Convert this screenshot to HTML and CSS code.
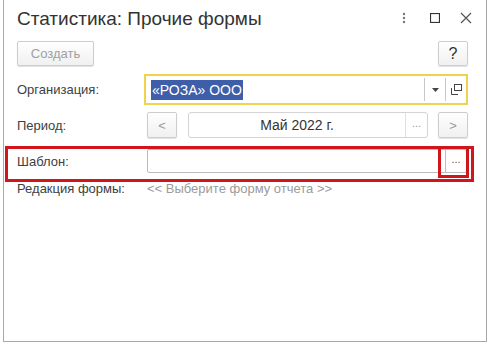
FILE: index.html
```html
<!DOCTYPE html>
<html lang="ru">

<head>
    <meta charset="UTF-8">
    <meta name="viewport" content="width=device-width, initial-scale=1.0">
    <title>Статистика: Прочие формы</title>
    <link rel="stylesheet" href="styles.css">
</head>

<body>
    <div id="window">
        <div class="head">
            <h1 class="title">Статистика: Прочие формы</h1>
            <div class="head-tools">
                <span class="tool">
                    <svg width="4" height="12" viewBox="0 0 4 12"><circle cx="2" cy="2" r="1.2" fill="#777"/><circle cx="2" cy="6" r="1.2" fill="#777"/><circle cx="2" cy="10" r="1.2" fill="#777"/></svg>
                </span>
                <span class="tool">
                    <svg width="10" height="10" viewBox="0 0 10 10"><rect x="0.5" y="0.5" width="9" height="9" fill="none" stroke="#333" stroke-width="1.2"/></svg>
                </span>
                <span class="tool">
                    <svg width="12" height="12" viewBox="0 0 12 12"><path d="M1 1 L11 11 M11 1 L1 11" stroke="#555" stroke-width="1.2"/></svg>
                </span>
            </div>
        </div>

        <div class="toolbar">
            <button class="btn btn-create">Создать</button>
            <button class="btn btn-help">?</button>
        </div>

        <div class="row row-org">
            <label class="lbl">Организация:</label>
            <div class="field field-org">
                <span class="field-text"><span class="selected">«РОЗА» ООО</span></span>
                <span class="field-btn">
                    <svg width="7" height="4" viewBox="0 0 7 4"><path d="M0 0 H7 L3.5 4 Z" fill="#444"/></svg>
                </span>
                <span class="field-btn">
                    <svg width="11" height="11" viewBox="0 0 11 11"><rect x="3.5" y="0.5" width="7" height="6" fill="none" stroke="#444"/><path d="M0.5 4 V10.5 H7" fill="none" stroke="#444"/></svg>
                </span>
            </div>
        </div>

        <div class="row row-period">
            <label class="lbl">Период:</label>
            <button class="btn btn-arrow">&lt;</button>
            <div class="field field-period">
                <span class="field-text center">Май 2022 г.</span>
                <span class="field-btn dots">...</span>
            </div>
            <button class="btn btn-arrow">&gt;</button>
        </div>

        <div class="row row-tpl">
            <label class="lbl">Шаблон:</label>
            <div class="field field-tpl">
                <span class="field-text"></span>
                <span class="field-btn dots">...</span>
            </div>
            <div class="mark mark-row"></div>
            <div class="mark mark-btn"></div>
        </div>

        <div class="row row-ver">
            <label class="lbl">Редакция формы:</label>
            <span class="hint">&lt;&lt; Выберите форму отчета &gt;&gt;</span>
        </div>
    </div>
</body>

</html>
```

FILE: styles.css
```css
* {
    margin: 0;
    padding: 0;
    box-sizing: border-box;
}

body {
    background: #fff;
    font-family: "Liberation Sans", Arial, sans-serif;
    font-size: 13px;
    color: #444;
}

#window {
    width: 484px;
    height: 342px;
    margin-left: 3px;
    border: 1px solid #a8a8a8;
    border-top: none;
    padding: 0 18px 0 13px;
    position: relative;
}

.head {
    display: flex;
    align-items: center;
    height: 36px;
}

.title {
    flex: 1;
    font-weight: normal;
    font-size: 19px;
    color: #333;
    padding-top: 1px;
}

.head-tools {
    display: flex;
    align-items: center;
    margin-right: -13px;
}

.tool {
    display: flex;
    justify-content: center;
    align-items: center;
    width: 31px;
    height: 20px;
}

.btn {
    font-family: inherit;
    font-size: 13px;
    height: 25px;
    border: 1px solid #cdcdcd;
    border-radius: 2px;
    background: linear-gradient(#fff, #f0f0f0);
    box-shadow: 0 1px 1px rgba(0, 0, 0, 0.12);
    color: #333;
}

.toolbar {
    display: flex;
    justify-content: space-between;
    margin-top: 5px;
}

.btn-create {
    width: 77px;
    color: #a0a0a0;
}

.btn-help {
    width: 30px;
    font-size: 16px;
}

.row {
    display: flex;
    align-items: center;
    position: relative;
}

.lbl {
    width: 130px;
    flex-shrink: 0;
    color: #404040;
}

.field {
    display: flex;
    align-items: stretch;
    border: 1px solid #bdbdbd;
    border-radius: 2px;
    background: #fff;
}

.field-text {
    flex: 1;
    display: flex;
    align-items: center;
    padding-left: 4px;
    color: #333;
}

.field-text.center {
    justify-content: center;
    font-size: 14px;
}

.field-btn {
    display: flex;
    justify-content: center;
    align-items: center;
    width: 21px;
    border-left: 1px solid #c8c8c8;
}

.dots {
    color: #999;
    font-size: 11px;
    padding-bottom: 4px;
}

.row-org {
    margin-top: 8px;
}

.field-org {
    width: 327px;
    height: 31px;
    margin-left: -3px;
    border: 2px solid #f0d24c;
    border-radius: 0;
}

.field-org .field-text {
    padding-left: 5px;
    font-size: 14px;
}

.selected {
    background: #3e5ea9;
    color: #fff;
    padding: 2px 1px;
}

.field-org .field-btn {
    width: 21px;
    margin: 2px 0;
}

.row-period {
    margin-top: 7px;
}

.btn-arrow {
    width: 30px;
    height: 26px;
    color: #999;
    font-size: 13px;
}

.field-period {
    width: 240px;
    height: 26px;
    margin: 0 10px 0 11px;
    border-color: #d4d4d4;
    border-radius: 3px;
}

.field-period .field-text {
    padding-left: 0;
}

.field-period .field-btn {
    width: 22px;
    border-left-color: #e0e0e0;
}

.row-tpl {
    margin-top: 11px;
}

.field-tpl {
    width: 320px;
    height: 24px;
}

.field-tpl .field-btn {
    width: 21px;
    border-left-color: #bdbdbd;
    color: #555;
}

.mark {
    position: absolute;
    border: 3px solid #d0161b;
}

.mark-row {
    left: -12px;
    top: -3px;
    width: 469px;
    height: 36px;
}

.mark-btn {
    left: 421px;
    top: -3px;
    width: 31px;
    height: 32px;
}

.row-ver {
    margin-top: 8px;
}

.hint {
    color: #9b9b9b;
}
```
